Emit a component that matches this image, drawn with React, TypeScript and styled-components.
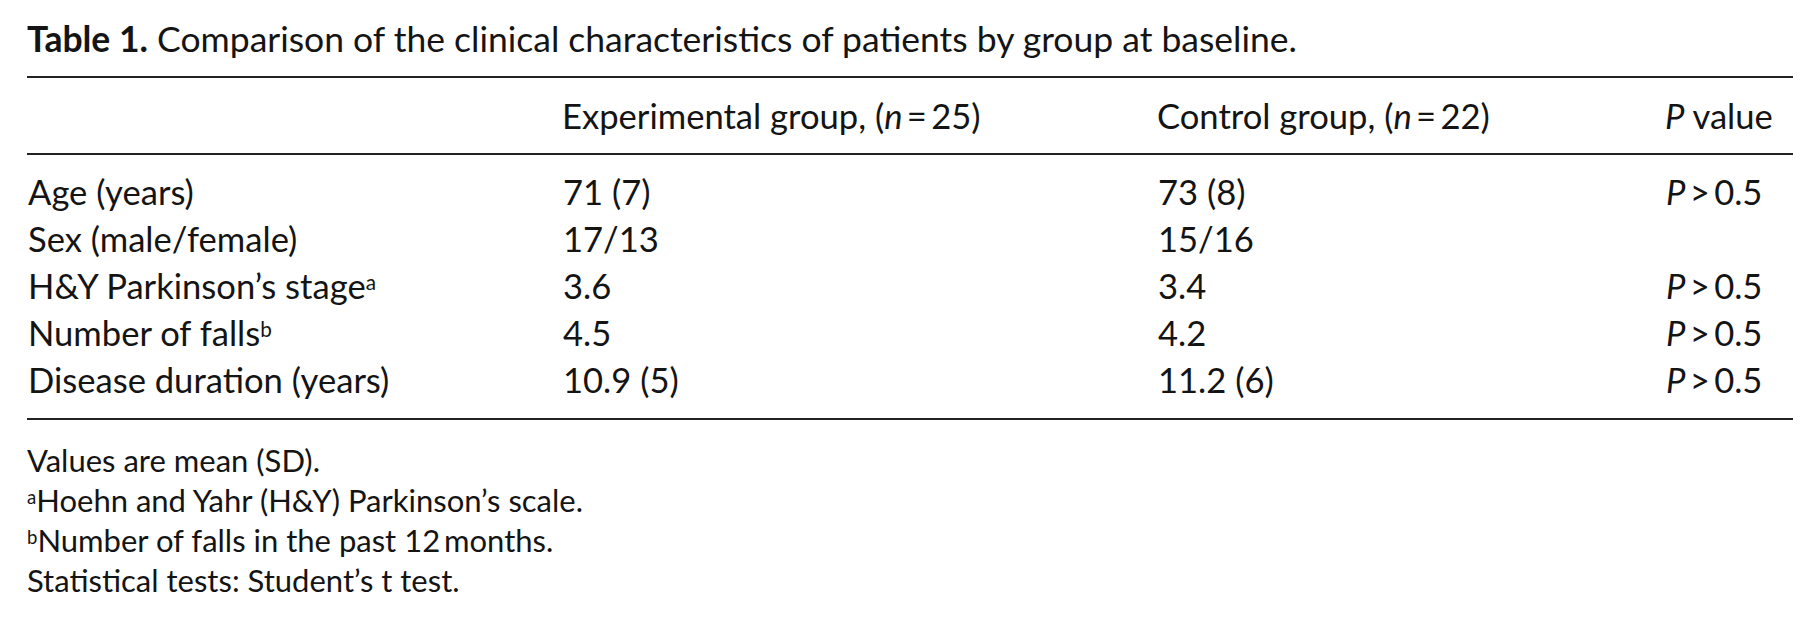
import * as React from "react";
import styled, { createGlobalStyle } from "styled-components";

type Row = {
  label: React.ReactNode;
  experimental: string;
  control: string;
  p?: boolean;
};

const PValue = () => (
  <>
    <i>P</i>
    {"\u2009>\u2009"}0.5
  </>
);

export default function App() {
  const rows: Row[] = [
    { label: "Age (years)", experimental: "71 (7)", control: "73 (8)", p: true },
    { label: "Sex (male/female)", experimental: "17/13", control: "15/16" },
    {
      label: (
        <>
          H&amp;Y Parkinson’s stage<Sup>a</Sup>
        </>
      ),
      experimental: "3.6",
      control: "3.4",
      p: true,
    },
    {
      label: (
        <>
          Number of falls<Sup>b</Sup>
        </>
      ),
      experimental: "4.5",
      control: "4.2",
      p: true,
    },
    {
      label: "Disease duration (years)",
      experimental: "10.9 (5)",
      control: "11.2 (6)",
      p: true,
    },
  ];

  return (
    <>
      <GlobalStyle />
      <Page>
        <Caption>
          <CaptionLabel>Table 1.</CaptionLabel> Comparison of the clinical
          characteristics of patients by group at baseline.
        </Caption>
        <Table>
          <colgroup>
            <col style={{ width: 535 }} />
            <col style={{ width: 595 }} />
            <col style={{ width: 508 }} />
            <col />
          </colgroup>
          <thead>
            <tr>
              <HeadCell />
              <HeadCell>
                Experimental group, (<i>n</i>
                {"\u2009=\u2009"}25)
              </HeadCell>
              <HeadCell>
                Control group, (<i>n</i>
                {"\u2009=\u2009"}22)
              </HeadCell>
              <HeadCell>
                <i>P</i> value
              </HeadCell>
            </tr>
          </thead>
          <tbody>
            {rows.map((r, i) => (
              <BodyRow key={i} $first={i === 0} $last={i === rows.length - 1}>
                <Cell>{r.label}</Cell>
                <Cell>{r.experimental}</Cell>
                <Cell>{r.control}</Cell>
                <Cell>{r.p && <PValue />}</Cell>
              </BodyRow>
            ))}
          </tbody>
        </Table>
        <Notes>
          <Note>Values are mean (SD).</Note>
          <Note>
            <Sup>a</Sup>Hoehn and Yahr (H&amp;Y) Parkinson’s scale.
          </Note>
          <Note>
            <Sup>b</Sup>Number of falls in the past 12{"\u2009"}months.
          </Note>
          <Note>Statistical tests: Student’s t test.</Note>
        </Notes>
      </Page>
    </>
  );
}

const GlobalStyle = createGlobalStyle`
  html, body {
    margin: 0;
    background: #ffffff;
  }
  body {
    font-family: Lato, "Open Sans", sans-serif;
    color: #141414;
  }
`;

const Page = styled.div`
  padding: 21px 24px 0 27px;
  width: 1766px;
`;

const Caption = styled.div`
  font-size: 35.5px;
  line-height: 36px;
  padding-bottom: 19px;
`;

const CaptionLabel = styled.b`
  font-weight: 700;
`;

const Table = styled.table`
  width: 100%;
  border-collapse: collapse;
  table-layout: fixed;
  font-size: 34.6px;
  border-top: 2px solid #222;
  border-bottom: 2px solid #222;
`;

const HeadCell = styled.th`
  text-align: left;
  font-weight: 400;
  padding: 21px 0 20px;
  line-height: 34px;
  border-bottom: 2px solid #222;
  white-space: nowrap;
`;

const BodyRow = styled.tr<{ $first: boolean; $last: boolean }>`
  td {
    padding-top: ${(p) => (p.$first ? 20 : 6.5)}px;
    padding-bottom: ${(p) => (p.$last ? 21 : 6.5)}px;
  }
`;

const Cell = styled.td`
  line-height: 34px;
  white-space: nowrap;
  vertical-align: middle;
`;

const Sup = styled.sup`
  font-size: 0.6em;
  vertical-align: 0.45em;
  line-height: 0;
`;

const Notes = styled.div`
  padding-top: 20px;
  font-size: 31px;
`;

const Note = styled.div`
  line-height: 40px;
`;
